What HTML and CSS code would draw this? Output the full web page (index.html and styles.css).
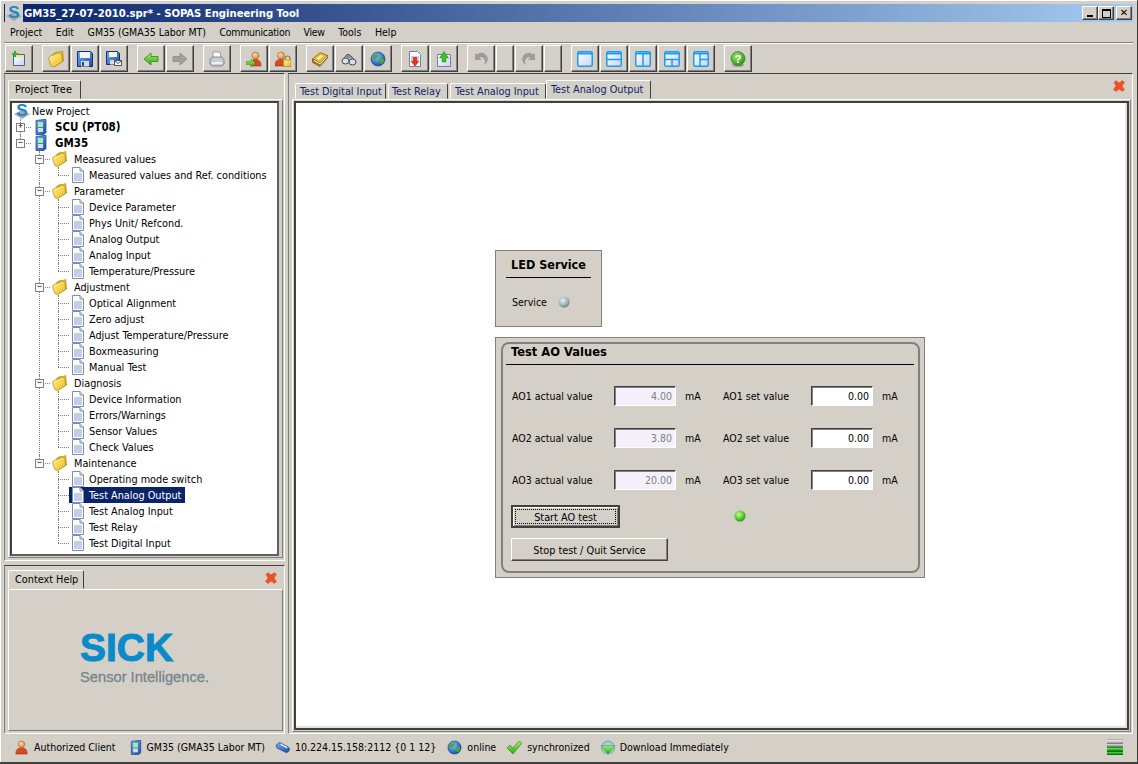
FILE: index.html
```html
<!DOCTYPE html>
<html lang="en">
<head>
<meta charset="utf-8">
<title>GM35_27-07-2010.spr* - SOPAS Engineering Tool</title>
<link rel="stylesheet" href="styles.css">
</head>
<body>
<svg class="sprite" aria-hidden="true">
  <defs>
    <linearGradient id="gBlue" x1="0" y1="0" x2="1" y2="1"><stop offset="0" stop-color="#6fb0f0"/><stop offset="1" stop-color="#1b4fa8"/></linearGradient>
    <linearGradient id="gYel" x1="0" y1="0" x2="1" y2="1"><stop offset="0" stop-color="#fff2a0"/><stop offset="1" stop-color="#f0b810"/></linearGradient>
    <linearGradient id="gGreen" x1="0" y1="0" x2="0" y2="1"><stop offset="0" stop-color="#a8ec60"/><stop offset="1" stop-color="#30a818"/></linearGradient>
    <linearGradient id="gPane" x1="0" y1="0" x2="1" y2="1"><stop offset="0" stop-color="#fff"/><stop offset="1" stop-color="#c8d4f4"/></linearGradient>
    <radialGradient id="gLedOff" cx=".4" cy=".35" r=".7"><stop offset="0" stop-color="#e4f0f0"/><stop offset=".6" stop-color="#9fb8bc"/><stop offset="1" stop-color="#5f7478"/></radialGradient>
    <radialGradient id="gLedOn" cx=".4" cy=".35" r=".7"><stop offset="0" stop-color="#c8f8a0"/><stop offset=".6" stop-color="#58c828"/><stop offset="1" stop-color="#268c10"/></radialGradient>
    <radialGradient id="gGlobe" cx=".4" cy=".35" r=".7"><stop offset="0" stop-color="#80c8f8"/><stop offset="1" stop-color="#0c4aa0"/></radialGradient>
    <radialGradient id="gHelp" cx=".4" cy=".35" r=".7"><stop offset="0" stop-color="#a0e860"/><stop offset="1" stop-color="#288c18"/></radialGradient>
    <radialGradient id="gFace" cx=".4" cy=".35" r=".7"><stop offset="0" stop-color="#ffd8a8"/><stop offset="1" stop-color="#d88840"/></radialGradient>
  </defs>
  <symbol id="i-logo" viewBox="0 0 18 18">
    <path d="M1 12 9 8l8 4-8 5z" fill="#a8a8a8"/>
  </symbol>
  <symbol id="i-doc" viewBox="0 0 12 16">
    <path d="M.5.5H8L11.500 4v11.500H.5z" fill="#fff" stroke="#7c8cb4"/>
    <path d="M8 .5V4h3.500" fill="#dfe4f4" stroke="#7c8cb4"/>
    <rect x="2" y="6" width="8" height="8" fill="#c4cdea"/>
  </symbol>
  <symbol id="i-folder" viewBox="0 0 16 16">
    <path d="M5 3 9.500.5l1 1L14.500 0l1 10-9 5.500z" fill="#f0c430" stroke="#a88610" stroke-width=".7"/>
    <path d="M.5 7.500C.8 6 2 5.200 3 4.800l7.500-2.800c1-.3 3 0 3.200 1L14.500 10.500 6.500 15.700c-1 .3-3 0-3.500-.7z" fill="url(#gYel)" stroke="#a88610" stroke-width=".7"/>
  </symbol>
  <symbol id="i-device" viewBox="0 0 12 16">
    <path d="M1 1.500 9 .5h2v13l-2 2H1z" fill="url(#gBlue)" stroke="#143c80" stroke-width=".7"/>
    <rect x="3" y="3" width="5" height="5" fill="#a8e8b0"/>
    <rect x="3" y="9" width="5" height="4" fill="#dcdcdc"/>
  </symbol>
  <symbol id="i-new" viewBox="0 0 16 16">
    <path d="M2.500 3.500h11v11h-11z" fill="url(#gPane)" stroke="#4a6098"/>
    <rect x="3" y="4" width="10" height="2.500" fill="#f0e8a0"/>
    <path d="M3 0h2v2h2v2H5v2H3V4H1V2h2z" fill="#38b028"/>
  </symbol>
  <symbol id="i-save" viewBox="0 0 16 16">
    <path d="M.5.5h13l2 2v13H.5z" fill="url(#gBlue)" stroke="#103070"/>
    <rect x="3" y="1" width="10" height="6" fill="#f4f4f4"/>
    <rect x="4" y="10" width="8" height="5.500" fill="#d8d8e0"/>
    <rect x="5" y="11" width="2" height="4" fill="#304880"/>
  </symbol>
  <symbol id="i-saveas" viewBox="0 0 16 16">
    <path d="M.5.5h11l2 2v11H.5z" fill="url(#gBlue)" stroke="#103070"/>
    <rect x="3" y="1" width="8" height="5" fill="#f4f4f4"/>
    <rect x="4" y="9" width="5" height="4.500" fill="#d8d8e0"/>
    <path d="M8.500 9.500h7v5h-7z" fill="#f8f8f8" stroke="#505050"/>
    <path d="m8.500 9.500 3.500 3 3.500-3" fill="none" stroke="#505050"/>
  </symbol>
  <symbol id="i-left" viewBox="0 0 16 16">
    <path d="M1 8 8 2v3.500h7v5H8V14z" fill="url(#gGreen)" stroke="#2a9018" stroke-width=".8"/>
  </symbol>
  <symbol id="i-right" viewBox="0 0 16 16">
    <path d="M15 8 8 2v3.500H1v5h7V14z" fill="#a0a0a0" stroke="#8c8c8c" stroke-width=".8"/>
  </symbol>
  <symbol id="i-print" viewBox="0 0 16 16">
    <path d="M4 1h7l1 6H4z" fill="#fff" stroke="#808890" stroke-width=".8"/>
    <path d="M1 8 4 6h9l2 3v4l-2 2H3l-2-2z" fill="#c8ccd4" stroke="#70767e" stroke-width=".8"/>
    <rect x="3" y="11" width="10" height="2" fill="#f0f0f0"/>
  </symbol>
  <symbol id="i-user" viewBox="0 0 16 16">
    <circle cx="8" cy="4.500" r="3.500" fill="url(#gFace)" stroke="#a86020" stroke-width=".6"/>
    <path d="M2 15c0-5 2-6.500 6-6.500s6 1.500 6 6.500z" fill="#d84a20" stroke="#983010" stroke-width=".6"/>
  </symbol>
  <symbol id="i-login" viewBox="0 0 16 16">
    <circle cx="9.500" cy="4.500" r="3.500" fill="url(#gFace)" stroke="#a86020" stroke-width=".6"/>
    <path d="M5 15c0-5 1.500-6.500 4.500-6.500s5.500 1.500 5.500 6.500z" fill="#d84a20" stroke="#983010" stroke-width=".6"/>
    <path d="m9 12-4 4v-2.500H0v-3h5V8z" fill="url(#gGreen)" stroke="#2a9018" stroke-width=".5"/>
  </symbol>
  <symbol id="i-lock" viewBox="0 0 16 16">
    <circle cx="6" cy="4.500" r="3.500" fill="url(#gFace)" stroke="#a86020" stroke-width=".6"/>
    <path d="M0 15c0-5 2-6.500 6-6.500 2 0 3 .5 4 1.500v5z" fill="#d84a20" stroke="#983010" stroke-width=".6"/>
    <path d="M10 9V7.500a2.500 2.500 0 0 1 5 0V9" fill="none" stroke="#a08020" stroke-width="1.200"/>
    <rect x="8.500" y="9" width="7.500" height="6.500" fill="url(#gYel)" stroke="#a08020" stroke-width=".6"/>
  </symbol>
  <symbol id="i-book" viewBox="0 0 16 16">
    <path d="M.5 8 8 1.500l7.500 3-7 8z" fill="#e8b830" stroke="#8c6410" stroke-width=".8"/>
    <path d="M.5 8v3.500L8 15.500l7.500-8.500V4.500l-7 8z" fill="#a87818" stroke="#705010" stroke-width=".6"/>
    <path d="m2 9.500 6.500 3.500 6.500-7.500" fill="none" stroke="#fff" stroke-width=".9"/>
    <path d="M4 7.500 9 4l2.500 1-5 4z" fill="#fff2b0"/>
  </symbol>
  <symbol id="i-bino" viewBox="0 0 16 16">
    <ellipse cx="4.500" cy="10" rx="3.500" ry="3" fill="#d8e0ec" stroke="#404858"/>
    <ellipse cx="11.500" cy="11" rx="3.500" ry="3" fill="#d8e0ec" stroke="#404858"/>
    <path d="M3 7 6 3.500h2.500L13 8" fill="#8a9098" stroke="#404858" stroke-width=".8"/>
  </symbol>
  <symbol id="i-globe" viewBox="0 0 16 16">
    <circle cx="8" cy="8" r="7" fill="url(#gGlobe)" stroke="#0c3c80" stroke-width=".6"/>
    <path d="M3 5c2-1 4-2 5-1 1 2-1 3-2 4-1 2-3 0-3-3zm7 3c2-1 4 0 4 1 0 2-2 4-3 4-1-1-2-3-1-5z" fill="#50a830"/>
  </symbol>
  <symbol id="i-dl" viewBox="0 0 16 16">
    <path d="M2.500.5h8l3 3v12h-11z" fill="#fff" stroke="#7080a8"/>
    <rect x="4" y="5" width="8" height="5" fill="#c8d0ec"/>
    <path d="M6 6h4v4h2.500L8 15.500 3.500 10H6z" fill="#e03818"/>
  </symbol>
  <symbol id="i-ul" viewBox="0 0 16 16">
    <path d="M1.500 3.500h13v12h-13z" fill="url(#gPane)" stroke="#7080a8"/>
    <path d="M6 11V7H3.500L8 .5 12.500 7H10v4z" fill="#38c028" stroke="#208c18" stroke-width=".5"/>
  </symbol>
  <symbol id="i-undo" viewBox="0 0 16 16">
    <path d="M2 2v7h7L6.500 6.500C9 5.500 12 7 12 11l-1 3c3-2 5-5 3-9-2-3.500-7-4.500-10-1.500z" fill="#9c9c9c"/>
  </symbol>
  <symbol id="i-redo" viewBox="0 0 16 16">
    <path d="M14 2v7H7l2.500-2.500C7 5.500 4 7 4 11l1 3c-3-2-5-5-3-9C4 1.500 9 .5 12 3.500z" fill="#9c9c9c"/>
  </symbol>
  <symbol id="i-w1" viewBox="0 0 16 16">
    <rect x=".75" y=".75" width="14.500" height="14.500" rx="1.500" fill="url(#gPane)" stroke="#1c9cf0" stroke-width="1.500"/>
    <path d="M1 2.500h14" stroke="#1c9cf0" stroke-width="2"/>
  </symbol>
  <symbol id="i-w2" viewBox="0 0 16 16">
    <use href="#i-w1" width="16" height="16"/>
    <path d="M1 8.500h14" stroke="#1c9cf0" stroke-width="1.500"/>
  </symbol>
  <symbol id="i-w3" viewBox="0 0 16 16">
    <use href="#i-w1" width="16" height="16"/>
    <path d="M8 3v12" stroke="#1c9cf0" stroke-width="1.500"/>
  </symbol>
  <symbol id="i-w4" viewBox="0 0 16 16">
    <use href="#i-w1" width="16" height="16"/>
    <path d="M1 8.500h14M8 8.500V15" stroke="#1c9cf0" stroke-width="1.500"/>
  </symbol>
  <symbol id="i-w5" viewBox="0 0 16 16">
    <use href="#i-w1" width="16" height="16"/>
    <path d="M7 3v12M7 8.500h8" stroke="#1c9cf0" stroke-width="1.500"/>
  </symbol>
  <symbol id="i-help" viewBox="0 0 16 16">
    <ellipse cx="8" cy="14" rx="6" ry="2" fill="#a0a0a0"/>
    <circle cx="8" cy="7.500" r="7" fill="url(#gHelp)" stroke="#208018" stroke-width=".6"/>
  </symbol>
  <symbol id="i-close" viewBox="0 0 12 12">
    <path d="M1 2.500 3 .5l3 2.500L9.500.5l2 2L9 6l2.500 3.500-2 2L6 9l-3 2.500-2.500-2L3 6z" fill="#f0501e" stroke="#d04018" stroke-width=".4"/>
  </symbol>
  <symbol id="i-plug" viewBox="0 0 16 12">
    <path d="M1 4 5 1l9 5c2 1 2 4 0 5-1 1-2 1-3 .5L2 7z" fill="url(#gBlue)" stroke="#103070" stroke-width=".6"/>
    <path d="m6 3 7 4" stroke="#e8f0ff" stroke-width="1.500"/>
  </symbol>
  <symbol id="i-check" viewBox="0 0 15 13">
    <path d="M0 7 3 4l3 3 6-7 3 2-9 11z" fill="url(#gGreen)" stroke="#208c18" stroke-width=".6"/>
  </symbol>
  <symbol id="i-sync" viewBox="0 0 15 16">
    <circle cx="7.500" cy="8" r="7" fill="#98d0e8" stroke="#4088a0" stroke-width=".6"/>
    <path d="M0 6h15l-7.500 9z" fill="url(#gGreen)" stroke="#2a9018" stroke-width=".5"/>
  </symbol>
  <symbol id="i-stack" viewBox="0 0 16 16">
    <rect y="0" width="16" height="4" fill="#b0b0b0"/><rect y="1" width="16" height="1.500" fill="#e4e4e4"/>
    <rect y="4" width="16" height="4" fill="#808080"/><rect y="5" width="16" height="1.500" fill="#d0d0d0"/>
    <rect y="8" width="16" height="4" fill="#189018"/><rect y="9" width="16" height="1.500" fill="#58e048"/>
    <rect y="12" width="16" height="4" fill="#107010"/><rect y="13" width="16" height="1.500" fill="#40d030"/>
  </symbol>
  <symbol id="i-led-off" viewBox="0 0 12 12">
    <circle cx="6" cy="6" r="5.500" fill="url(#gLedOff)"/>
  </symbol>
  <symbol id="i-led-on" viewBox="0 0 12 12">
    <circle cx="6" cy="6" r="5.500" fill="url(#gLedOn)"/>
  </symbol>
</svg>

<div class="window">
  <header class="titlebar">
    <svg class="title-icon" viewBox="0 0 18 18"><use href="#i-logo" width="18" height="18"/><text class="logo-s" x="9" y="13.500">S</text></svg>
    <span class="title-text">GM35_27-07-2010.spr* - SOPAS Engineering Tool</span>
    <div class="winctl">
      <button class="wbtn" type="button" aria-label="Minimize"><span class="g-min"></span></button>
      <button class="wbtn" type="button" aria-label="Maximize"><span class="g-max"></span></button>
      <button class="wbtn wbtn-close" type="button" aria-label="Close">✕</button>
    </div>
  </header>

  <nav class="menubar">
    <span class="menu">Project</span>
    <span class="menu">Edit</span>
    <span class="menu">GM35 (GMA35 Labor MT)</span>
    <span class="menu menu-tight">Communication</span>
    <span class="menu menu-tight">View</span>
    <span class="menu">Tools</span>
    <span class="menu">Help</span>
  </nav>

  <div class="toolbar">
    <div class="tgroup"><button class="tbtn" type="button"><svg class="ti"><use href="#i-new"/></svg></button></div>
    <div class="tgroup">
      <button class="tbtn" type="button"><svg class="ti"><use href="#i-folder"/></svg></button>
      <button class="tbtn" type="button"><svg class="ti"><use href="#i-save"/></svg></button>
      <button class="tbtn" type="button"><svg class="ti"><use href="#i-saveas"/></svg></button>
    </div>
    <div class="tgroup">
      <button class="tbtn" type="button"><svg class="ti"><use href="#i-left"/></svg></button>
      <button class="tbtn" type="button"><svg class="ti"><use href="#i-right"/></svg></button>
    </div>
    <div class="tgroup"><button class="tbtn" type="button"><svg class="ti"><use href="#i-print"/></svg></button></div>
    <div class="tgroup">
      <button class="tbtn" type="button"><svg class="ti"><use href="#i-login"/></svg></button>
      <button class="tbtn" type="button"><svg class="ti"><use href="#i-lock"/></svg></button>
    </div>
    <div class="tgroup">
      <button class="tbtn" type="button"><svg class="ti"><use href="#i-book"/></svg></button>
      <button class="tbtn" type="button"><svg class="ti"><use href="#i-bino"/></svg></button>
      <button class="tbtn" type="button"><svg class="ti"><use href="#i-globe"/></svg></button>
    </div>
    <div class="tgroup">
      <button class="tbtn" type="button"><svg class="ti"><use href="#i-dl"/></svg></button>
      <button class="tbtn" type="button"><svg class="ti"><use href="#i-ul"/></svg></button>
    </div>
    <div class="tgroup">
      <button class="tbtn" type="button"><svg class="ti"><use href="#i-undo"/></svg></button>
      <button class="tbtn tbtn-narrow" type="button"></button>
      <button class="tbtn" type="button"><svg class="ti"><use href="#i-redo"/></svg></button>
      <button class="tbtn tbtn-narrow" type="button"></button>
    </div>
    <div class="tgroup">
      <button class="tbtn" type="button"><svg class="ti"><use href="#i-w1"/></svg></button>
      <button class="tbtn" type="button"><svg class="ti"><use href="#i-w2"/></svg></button>
      <button class="tbtn" type="button"><svg class="ti"><use href="#i-w3"/></svg></button>
      <button class="tbtn" type="button"><svg class="ti"><use href="#i-w4"/></svg></button>
      <button class="tbtn" type="button"><svg class="ti"><use href="#i-w5"/></svg></button>
    </div>
    <div class="tgroup"><button class="tbtn" type="button"><svg class="ti" viewBox="0 0 16 16"><use href="#i-help" width="16" height="16"/><text class="help-q" x="8" y="11.500">?</text></svg></button></div>
  </div>

  <main class="main">
    <div class="leftcol">
      <section class="panel panel-tree">
        <div class="tabstrip"><span class="tab tab-side tab-project">Project Tree</span></div>
        <div class="pane pane-tree">
          <div class="tree">
            <div class="root-row"><svg class="ic-logo" viewBox="0 0 18 18"><use href="#i-logo" width="18" height="18"/><text class="logo-s" x="9" y="13.500">S</text></svg><span>New Project</span></div>
            <ul class="l1">
              <li>
                <span class="exp">+</span>
                <div class="row1"><svg class="ic-dev"><use href="#i-device"/></svg><b>SCU (PT08)</b></div>
              </li>
              <li>
                <span class="exp">−</span>
                <div class="row1"><svg class="ic-dev"><use href="#i-device"/></svg><b>GM35</b></div>
                <ul class="l2">
                  <li>
                    <span class="exp">−</span>
                    <div class="row2"><svg class="ic-fold"><use href="#i-folder"/></svg><span>Measured values</span></div>
                    <ul class="l3">
                      <li><div class="row3"><span class="item"><svg class="ic-doc"><use href="#i-doc"/></svg><span>Measured values and Ref. conditions</span></span></div></li>
                    </ul>
                  </li>
                  <li>
                    <span class="exp">−</span>
                    <div class="row2"><svg class="ic-fold"><use href="#i-folder"/></svg><span>Parameter</span></div>
                    <ul class="l3">
                      <li><div class="row3"><span class="item"><svg class="ic-doc"><use href="#i-doc"/></svg><span>Device Parameter</span></span></div></li>
                      <li><div class="row3"><span class="item"><svg class="ic-doc"><use href="#i-doc"/></svg><span>Phys Unit/ Refcond.</span></span></div></li>
                      <li><div class="row3"><span class="item"><svg class="ic-doc"><use href="#i-doc"/></svg><span>Analog Output</span></span></div></li>
                      <li><div class="row3"><span class="item"><svg class="ic-doc"><use href="#i-doc"/></svg><span>Analog Input</span></span></div></li>
                      <li><div class="row3"><span class="item"><svg class="ic-doc"><use href="#i-doc"/></svg><span>Temperature/Pressure</span></span></div></li>
                    </ul>
                  </li>
                  <li>
                    <span class="exp">−</span>
                    <div class="row2"><svg class="ic-fold"><use href="#i-folder"/></svg><span>Adjustment</span></div>
                    <ul class="l3">
                      <li><div class="row3"><span class="item"><svg class="ic-doc"><use href="#i-doc"/></svg><span>Optical Alignment</span></span></div></li>
                      <li><div class="row3"><span class="item"><svg class="ic-doc"><use href="#i-doc"/></svg><span>Zero adjust</span></span></div></li>
                      <li><div class="row3"><span class="item"><svg class="ic-doc"><use href="#i-doc"/></svg><span>Adjust Temperature/Pressure</span></span></div></li>
                      <li><div class="row3"><span class="item"><svg class="ic-doc"><use href="#i-doc"/></svg><span>Boxmeasuring</span></span></div></li>
                      <li><div class="row3"><span class="item"><svg class="ic-doc"><use href="#i-doc"/></svg><span>Manual Test</span></span></div></li>
                    </ul>
                  </li>
                  <li>
                    <span class="exp">−</span>
                    <div class="row2"><svg class="ic-fold"><use href="#i-folder"/></svg><span>Diagnosis</span></div>
                    <ul class="l3">
                      <li><div class="row3"><span class="item"><svg class="ic-doc"><use href="#i-doc"/></svg><span>Device Information</span></span></div></li>
                      <li><div class="row3"><span class="item"><svg class="ic-doc"><use href="#i-doc"/></svg><span>Errors/Warnings</span></span></div></li>
                      <li><div class="row3"><span class="item"><svg class="ic-doc"><use href="#i-doc"/></svg><span>Sensor Values</span></span></div></li>
                      <li><div class="row3"><span class="item"><svg class="ic-doc"><use href="#i-doc"/></svg><span>Check Values</span></span></div></li>
                    </ul>
                  </li>
                  <li>
                    <span class="exp">−</span>
                    <div class="row2"><svg class="ic-fold"><use href="#i-folder"/></svg><span>Maintenance</span></div>
                    <ul class="l3">
                      <li><div class="row3"><span class="item"><svg class="ic-doc"><use href="#i-doc"/></svg><span>Operating mode switch</span></span></div></li>
                      <li><div class="row3"><span class="item selected"><svg class="ic-doc"><use href="#i-doc"/></svg><span>Test Analog Output</span></span></div></li>
                      <li><div class="row3"><span class="item"><svg class="ic-doc"><use href="#i-doc"/></svg><span>Test Analog Input</span></span></div></li>
                      <li><div class="row3"><span class="item"><svg class="ic-doc"><use href="#i-doc"/></svg><span>Test Relay</span></span></div></li>
                      <li><div class="row3"><span class="item"><svg class="ic-doc"><use href="#i-doc"/></svg><span>Test Digital Input</span></span></div></li>
                    </ul>
                  </li>
                </ul>
              </li>
            </ul>
          </div>
        </div>
      </section>

      <section class="panel panel-help">
        <div class="tabstrip">
          <span class="tab tab-side tab-context">Context Help</span>
          <svg class="ic-close ic-close-help"><use href="#i-close"/></svg>
        </div>
        <div class="pane pane-help">
          <div class="sick">SICK</div>
          <div class="sick-tag">Sensor Intelligence.</div>
        </div>
      </section>
    </div>

    <section class="panel panel-right">
      <div class="tabstrip tabstrip-right">
        <span class="tab tab-doc t-digital">Test Digital Input</span>
        <span class="tab tab-doc t-relay">Test Relay</span>
        <span class="tab tab-doc t-input">Test Analog Input</span>
        <span class="tab tab-doc tab-active">Test Analog Output</span>
        <svg class="ic-close ic-close-main"><use href="#i-close"/></svg>
      </div>
      <div class="pane pane-main">
        <div class="canvas">
          <div class="led-card">
            <h2 class="led-title">LED Service</h2>
            <div class="led-row"><span class="led-label">Service</span><svg class="led"><use href="#i-led-off"/></svg></div>
          </div>
          <div class="ao-card">
            <div class="ao-group">
              <h2 class="ao-title">Test AO Values</h2>
              <div class="ao-grid">
                <span>AO1 actual value</span><span class="field ro">4.00</span><span class="unit">mA</span>
                <span>AO1 set value</span><span class="field">0.00</span><span class="unit">mA</span>
                <span>AO2 actual value</span><span class="field ro">3.80</span><span class="unit">mA</span>
                <span>AO2 set value</span><span class="field">0.00</span><span class="unit">mA</span>
                <span>AO3 actual value</span><span class="field ro">20.00</span><span class="unit">mA</span>
                <span>AO3 set value</span><span class="field">0.00</span><span class="unit">mA</span>
              </div>
              <div class="ao-actions">
                <button class="btn btn-start" type="button"><span class="focus">Start AO test</span></button>
                <svg class="led led-on"><use href="#i-led-on"/></svg>
              </div>
              <button class="btn btn-stop" type="button">Stop test / Quit Service</button>
            </div>
          </div>
        </div>
      </div>
    </section>
  </main>

  <footer class="statusbar">
    <span class="st st-user"><svg class="si"><use href="#i-user"/></svg>Authorized Client</span>
    <span class="st st-dev"><svg class="si-dev"><use href="#i-device"/></svg>GM35 (GMA35 Labor MT)</span>
    <span class="st st-net"><svg class="si-plug"><use href="#i-plug"/></svg>10.224.15.158:2112 {0 1 12}</span>
    <span class="st st-on"><svg class="si"><use href="#i-globe"/></svg>online</span>
    <span class="st st-sync"><svg class="si-check"><use href="#i-check"/></svg>synchronized</span>
    <span class="st"><svg class="si-sync"><use href="#i-sync"/></svg>Download Immediately</span>
    <svg class="si-stack"><use href="#i-stack"/></svg>
  </footer>
</div>
</body>
</html>
```

FILE: styles.css
```css
* { box-sizing: border-box; }
html, body { margin: 0; height: 100%; }
body {
  font-family: "DejaVu Sans Condensed", "DejaVu Sans", sans-serif;
  font-size: 10.5px;
  color: #000;
  background: #d4d0c8;
  overflow: hidden;
}
.sprite { position: absolute; width: 0; height: 0; }
svg { display: block; flex: none; }
.logo-s {
  font-family: "Liberation Sans", Arial, sans-serif;
  font-weight: 700;
  font-size: 17px;
  text-anchor: middle;
  fill: #1a88cc;
}
.help-q {
  font-family: "Liberation Sans", Arial, sans-serif;
  font-weight: 700;
  font-size: 11px;
  text-anchor: middle;
  fill: #fff;
}

.window {
  width: 1138px;
  height: 764px;
  padding: 4px 4px 2px 4px;
  display: flex;
  flex-direction: column;
  background: #d4d0c8;
  border-right: 1px solid #404040;
  border-bottom: 2px solid #404040;
  box-shadow: inset 1px 1px 0 #fff;
}

/* title bar */
.titlebar {
  height: 18px;
  flex: none;
  display: flex;
  align-items: center;
  padding: 0 1px;
  background: linear-gradient(90deg, #0a246a, #a6caf0);
  color: #fff;
}
.title-icon { width: 18px; height: 18px; background: #d4d0c8; }
.title-text { margin-left: 1px; font-weight: 700; font-size: 11.2px; white-space: nowrap; }
.winctl { margin-left: auto; display: flex; }
.wbtn {
  width: 16px;
  height: 14px;
  padding: 0;
  margin: 0;
  display: flex;
  align-items: center;
  justify-content: center;
  background: #d4d0c8;
  color: #000;
  font: 700 10px/1 "DejaVu Sans", sans-serif;
  border: 1px solid;
  border-color: #fff #404040 #404040 #fff;
  box-shadow: inset -1px -1px 0 #808080;
}
.wbtn-close { margin-left: 2px; }
.g-min { width: 6px; height: 2px; background: #000; margin-top: 6px; }
.g-max { width: 9px; height: 9px; border: 1px solid #000; border-top-width: 2px; }

/* menu */
.menubar {
  height: 20px;
  flex: none;
  display: flex;
  align-items: center;
  padding-left: 6px;
  gap: 13.500px;
}
.menu { white-space: nowrap; }
.menu-tight { letter-spacing: -.3px; }

/* toolbar */
.toolbar {
  height: 31px;
  flex: none;
  display: flex;
  gap: 9px;
  padding: 2px 0 0 1px;
  border-top: 1px solid #808080;
  box-shadow: inset 0 1px 0 #fff;
}
.tgroup { display: flex; gap: 1px; }
.tbtn {
  width: 28px;
  height: 27px;
  padding: 0;
  margin: 0;
  display: flex;
  align-items: center;
  justify-content: center;
  background: #d4d0c8;
  border: 1px solid;
  border-color: #fff #404040 #404040 #fff;
  box-shadow: inset -1px -1px 0 #808080;
}
.tbtn-narrow { width: 18px; }
.ti { width: 16px; height: 16px; }

/* main split */
.main { flex: 1; min-height: 0; display: flex; gap: 3px; }
.leftcol { width: 281px; flex: none; display: flex; flex-direction: column; gap: 4px; }
.panel {
  display: flex;
  flex-direction: column;
  border: 1px solid;
  border-color: #404040 #fff #fff #808080;
}
.panel-tree { height: 488px; padding: 6px 1px 2px 3px; }
.panel-help { flex: 1; padding: 4px 1px 2px 3px; }
.panel-right { flex: 1; min-width: 0; padding: 6px 1px 1px 3px; }

.tabstrip { display: flex; align-items: flex-end; flex: none; height: 19px; }
.tab {
  height: 19px;
  display: flex;
  align-items: center;
  white-space: nowrap;
  border: 1px solid;
  border-color: #fff #404040 transparent #fff;
  border-radius: 2px 2px 0 0;
  font-size: 10.800px;
}
.tab-side { padding: 0 0 1px 6px; }
.tab-project { width: 73px; letter-spacing: .05px; }
.tab-context { width: 76px; }
.tab-doc { height: 16px; padding: 0 0 0 4px; color: #0a246a; margin-right: 2px; }
.t-digital { width: 91px; margin-left: 3px; }
.t-relay { width: 60px; padding-left: 3px; }
.t-input { width: 96px; margin-right: 0; }
.tab-active { height: 19px; width: 105px; margin-right: 0; padding-bottom: 1px; }

.ic-close { width: 12px; height: 12px; }
.ic-close-help { margin-left: auto; margin-right: 6px; align-self: flex-start; margin-top: 2px; }
.ic-close-main { margin-left: auto; margin-right: 6px; align-self: flex-start; }

.pane {
  flex: 1;
  min-height: 0;
  border: 1px solid;
  border-color: #fff #808080 #808080 #fff;
}
.pane-tree { padding: 1px 3px 1px 1px; }
.pane-help { padding: 42px 0 0 71px; }
.pane-main { padding: 1px; display: flex; }

/* tree */
.tree {
  height: 100%;
  background: #fff;
  border: 2px solid;
  border-color: #404040 #606060 #606060 #404040;
  font-size: 10.800px;
}
.tree ul { list-style: none; margin: 0; padding: 0; }
.tree li { position: relative; }
.tree li::before {
  content: "";
  position: absolute;
  left: 0; top: 0; bottom: 0;
  border-left: 1px dotted #808080;
}
.tree li:last-child::before { bottom: auto; height: 8px; }
.tree li::after {
  content: "";
  position: absolute;
  left: 0; top: 8px; width: 11px;
  border-top: 1px dotted #808080;
}
.root-row { height: 16px; display: flex; align-items: center; padding-left: 1px; gap: 1px; }
.ic-logo { width: 18px; height: 18px; margin: -1px 0; }
.tree .l1 { margin-left: 8px; }
.tree .l2, .tree .l3 { margin-left: 19px; }
.row1, .row2, .row3 { height: 16px; display: flex; align-items: center; position: relative; z-index: 1; }
.row1 { padding-left: 15px; }
.row1 b { margin-left: 8px; font-size: 11.500px; }
.ic-dev { width: 12px; height: 16px; }
.row2 { padding-left: 13px; }
.row2 > span { margin-left: 7px; }
.ic-fold { width: 15px; height: 16px; }
.row3 { padding-left: 11px; }
.item { display: flex; align-items: center; height: 16px; padding: 0 4px 0 3px; white-space: nowrap; }
.item > span { margin-left: 5px; }
.ic-doc { width: 12px; height: 16px; }
.selected { background: #0a246a; color: #fff; }
.exp {
  position: absolute;
  left: -4px; top: 4px;
  width: 9px; height: 9px;
  z-index: 2;
  background: #fff;
  border: 1px solid #808080;
  display: flex;
  align-items: center;
  justify-content: center;
  font: 9px/1 "Liberation Mono", monospace;
}

/* logo */
.sick {
  font-family: "Liberation Sans", Arial, sans-serif;
  font-weight: 700;
  font-size: 39px;
  line-height: 32px;
  color: #0a8acb;
  -webkit-text-stroke: 1px #0a8acb;
}
.sick-tag {
  font-family: "Liberation Sans", Arial, sans-serif;
  margin-top: 5px;
  font-size: 14.700px;
  color: #76868c;
  -webkit-text-stroke: .3px #76868c;
  white-space: nowrap;
}

/* canvas */
.canvas {
  flex: 1;
  min-width: 0;
  background: #fff;
  border: 2px solid #404040;
  box-shadow: inset -2px -2px 0 #e4e2dc;
  padding: 147px 0 0 199px;
  display: flex;
  flex-direction: column;
  align-items: flex-start;
  gap: 10px;
}
.led-card, .ao-card { background: #d4d0c8; border: 1px solid #808080; }
.led-card { width: 107px; height: 77px; padding: 6px 10px; }
.led-title {
  margin: 0;
  height: 21px;
  font-size: 12.500px;
  line-height: 15px;
  font-weight: 700;
  text-align: center;
  border-bottom: 1px solid #000;
}
.led-row { display: flex; align-items: center; padding: 18px 0 0 6px; }
.led-label { width: 46px; }
.led { width: 12px; height: 12px; }

.ao-card { width: 430px; height: 241px; padding: 4px 4px 4px 5px; }
.ao-group {
  height: 100%;
  border: 2px solid #808080;
  border-radius: 8px;
  padding: 0 4px 0 3px;
}
.ao-title {
  margin: 0;
  height: 21px;
  padding-left: 5px;
  font-size: 12.800px;
  line-height: 16px;
  font-weight: 700;
  border-bottom: 1px solid #000;
}
.ao-grid {
  margin: 21px 0 0 6px;
  display: grid;
  grid-template-columns: 102px 62px 47px 88px 62px 30px;
  grid-auto-rows: 20px;
  row-gap: 22px;
  align-items: center;
}
.unit { padding-left: 9px; }
.field {
  height: 20px;
  display: flex;
  align-items: center;
  justify-content: flex-end;
  padding-right: 3px;
  background: #fff;
  border: 1px solid;
  border-color: #404040 #fff #fff #404040;
  box-shadow: inset 1px 1px 0 #808080;
}
.field.ro { background: #f4f1fd; color: #808080; }
.ao-actions { display: flex; align-items: center; margin: 15px 0 0 5px; }
.btn {
  display: block;
  height: 23px;
  padding: 0;
  font: inherit;
  font-size: 10.800px;
  color: #000;
  background: #d4d0c8;
  border: 1px solid;
  border-color: #fff #404040 #404040 #fff;
  box-shadow: inset -1px -1px 0 #808080;
}
.btn-start {
  width: 109px;
  border: 2px solid #404040;
  box-shadow: inset 1px 1px 0 #fff, inset -1px -1px 0 #808080;
  padding: 2px;
}
.focus {
  display: flex;
  align-items: center;
  justify-content: center;
  height: 100%;
  border: 1px dotted #000;
  padding-top: 1px;
}
.led-on { margin: 0 0 2px 114px; }
.btn-stop { width: 157px; margin: 10px 0 0 5px; padding-top: 2px; }

/* status bar */
.statusbar {
  flex: none;
  height: 26px;
  display: flex;
  align-items: center;
  padding: 0 10px;
}
.st { display: flex; align-items: center; white-space: nowrap; }
.si { width: 15px; height: 15px; margin-right: 5px; }
.si-dev { width: 12px; height: 15px; margin-right: 5px; }
.si-plug { width: 15px; height: 12px; margin-right: 5px; }
.si-check { width: 15px; height: 13px; margin-right: 5px; }
.si-sync { width: 14px; height: 15px; margin-right: 5px; }
.st-user { margin-right: 14px; }
.st-dev { margin-right: 10px; }
.st-net, .st-on, .st-sync { margin-right: 11px; }
.si-stack { width: 16px; height: 16px; margin-left: auto; }
```
